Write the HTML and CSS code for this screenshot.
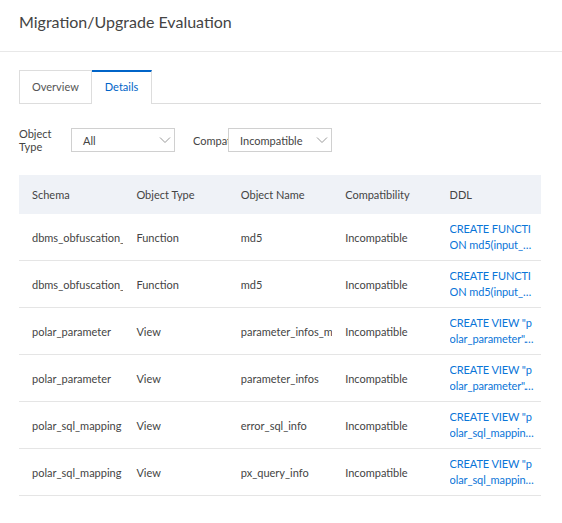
FILE: index.html
```html
<!DOCTYPE html>
<html lang="en">
<head>
    <meta charset="UTF-8">
    <meta name="viewport" content="width=device-width, initial-scale=1.0">
    <title>Migration/Upgrade Evaluation</title>
    <link rel="stylesheet" href="styles.css">
</head>
<body>

<div class="page-header">
    <h2>Migration/Upgrade Evaluation</h2>
</div>

<div class="content">
    <div class="tabs">
        <div class="tab">Overview</div>
        <div class="tab active">Details</div>
    </div>

    <div class="filters">
        <label class="filter-label type-label">Object Type</label>
        <div class="select">
            <span>All</span>
            <svg width="12" height="8" viewBox="0 0 12 8"><path d="M1 1.5 L6 6.5 L11 1.5" fill="none" stroke="#999" stroke-width="1"/></svg>
        </div>
        <label class="filter-label compat-label">Compatibility</label>
        <div class="select">
            <span>Incompatible</span>
            <svg width="12" height="8" viewBox="0 0 12 8"><path d="M1 1.5 L6 6.5 L11 1.5" fill="none" stroke="#999" stroke-width="1"/></svg>
        </div>
    </div>

    <table class="result-table">
        <thead>
            <tr>
                <th>Schema</th>
                <th>Object Type</th>
                <th>Object Name</th>
                <th>Compatibility</th>
                <th>DDL</th>
            </tr>
        </thead>
        <tbody>
            <tr>
                <td>dbms_obfuscation_toolkit</td>
                <td>Function</td>
                <td>md5</td>
                <td>Incompatible</td>
                <td><a class="ddl" href="#">CREATE FUNCTION md5(input_string character varying) RETURNS text</a></td>
            </tr>
            <tr>
                <td>dbms_obfuscation_toolkit</td>
                <td>Function</td>
                <td>md5</td>
                <td>Incompatible</td>
                <td><a class="ddl" href="#">CREATE FUNCTION md5(input_raw bytea) RETURNS text</a></td>
            </tr>
            <tr>
                <td>polar_parameter</td>
                <td>View</td>
                <td>parameter_infos_mem</td>
                <td>Incompatible</td>
                <td><a class="ddl" href="#">CREATE VIEW "polar_parameter"."parameter_infos_mem" AS SELECT</a></td>
            </tr>
            <tr>
                <td>polar_parameter</td>
                <td>View</td>
                <td>parameter_infos</td>
                <td>Incompatible</td>
                <td><a class="ddl" href="#">CREATE VIEW "polar_parameter"."parameter_infos" AS SELECT</a></td>
            </tr>
            <tr>
                <td>polar_sql_mapping</td>
                <td>View</td>
                <td>error_sql_info</td>
                <td>Incompatible</td>
                <td><a class="ddl" href="#">CREATE VIEW "polar_sql_mapping"."error_sql_info" AS SELECT</a></td>
            </tr>
            <tr>
                <td>polar_sql_mapping</td>
                <td>View</td>
                <td>px_query_info</td>
                <td>Incompatible</td>
                <td><a class="ddl" href="#">CREATE VIEW "polar_sql_mapping"."px_query_info" AS SELECT</a></td>
            </tr>
        </tbody>
    </table>
</div>

</body>
</html>
```

FILE: styles.css
```css
body {
    font-family: Lato, "Open Sans", sans-serif;
    color: #444;
    background-color: #fff;
    margin: 0;
    font-size: 11px;
}
.page-header {
    height: 52px;
    border-bottom: 1px solid #e8e8e8;
    box-sizing: border-box;
    padding: 0 19px;
}
h2 {
    margin: 0;
    padding-top: 10px;
    font-size: 16px;
    font-weight: normal;
    color: #444;
    line-height: 24px;
}
.content {
    padding: 18px 21px 0 19px;
}
.tabs {
    display: flex;
    height: 33px;
    border-bottom: 1px solid #ddd;
}
.tab {
    box-sizing: border-box;
    height: 33px;
    line-height: 32px;
    padding: 0 12px;
    border: 1px solid #ddd;
    border-bottom: none;
    background-color: #fff;
    color: #555;
}
.tab.active {
    color: #0064c8;
    border-top: 2px solid #0064c8;
    border-left: none;
    height: 34px;
    margin-bottom: -1px;
    line-height: 30px;
    padding: 0 13px;
}
.filters {
    display: flex;
    align-items: center;
    margin-top: 24px;
    height: 24px;
}
.filter-label {
    color: #444;
    line-height: 13px;
}
.type-label {
    width: 52px;
}
.compat-label {
    width: 35px;
    margin-left: 18px;
    white-space: nowrap;
    overflow: hidden;
}
.select {
    box-sizing: border-box;
    width: 104px;
    height: 24px;
    border: 1px solid #d0d0d0;
    display: flex;
    align-items: center;
    justify-content: space-between;
    padding: 0 3px 0 11px;
    color: #444;
}
.result-table {
    width: 100%;
    margin-top: 23px;
    border-collapse: collapse;
    table-layout: fixed;
}
th, td {
    text-align: left;
    padding: 0 0 0 13px;
    white-space: nowrap;
    overflow: hidden;
    font-weight: normal;
}
th {
    background-color: #eff2f7;
    height: 39px;
    color: #444;
}
td {
    height: 46px;
    border-bottom: 1px solid #e5e5e5;
}
.ddl {
    display: -webkit-box;
    -webkit-line-clamp: 2;
    -webkit-box-orient: vertical;
    white-space: normal;
    word-break: break-all;
    line-break: anywhere;
    overflow: hidden;
    color: #0a75d8;
    text-decoration: none;
    line-height: 16px;
    width: 85px;
    letter-spacing: -0.1px;
}
```
